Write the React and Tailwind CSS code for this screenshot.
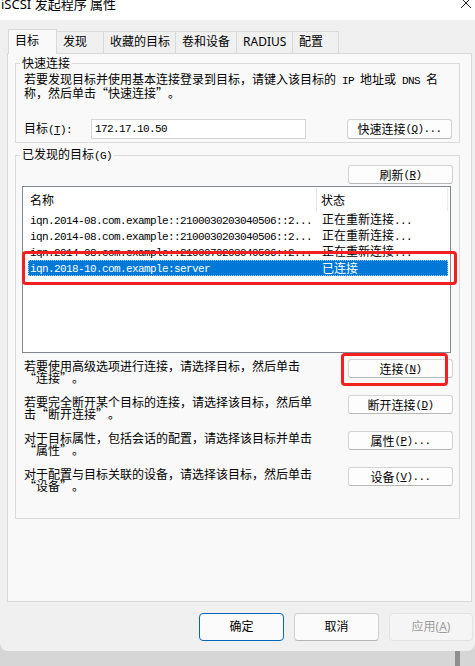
import React from "react";

const UI = "font-['Noto_Sans','Noto_Sans_CJK_SC',sans-serif]";
const SIM = "font-['Noto_Sans_CJK_SC',sans-serif] text-[12px] leading-[12px] text-black";

// full-width curly quotes, as in SimSun
const Cjk = ({ s }) =>
  s.split(/([“”])/).map((c, i) =>
    c === "“" ? (
      <span key={i} className="inline-block w-[12px] text-right">“</span>
    ) : c === "”" ? (
      <span key={i} className="inline-block w-[12px] text-left">”</span>
    ) : (
      <React.Fragment key={i}>{c}</React.Fragment>
    )
  );

// SimSun-like text: ascii runs drawn half-width (6px), "&x" underlines x
const Sim = ({ children }) =>
  String(children)
    .split(/([\x20-\x7e]+)/)
    .map((s, i) => {
      if (!s) return null;
      if (!/^[\x20-\x7e]+$/.test(s)) return <Cjk key={i} s={s} />;
      const acc = s.split("&");
      return (
        <span
          key={i}
          className="font-['Liberation_Mono',monospace] text-[11px] tracking-[-0.6px] whitespace-pre"
        >
          {acc.map((a, j) =>
            j === 0 ? (
              a
            ) : (
              <React.Fragment key={j}>
                <span className="underline underline-offset-1">{a[0]}</span>
                {a.slice(1)}
              </React.Fragment>
            )
          )}
        </span>
      );
    });

const Btn = ({ label, h = "h-[19px]" }) => (
  <button
    className={`flex items-center justify-center w-[105px] ${h} rounded-[3px] bg-[#fdfdfd] border border-[#d3d3d3] border-b-[#b8b8b8] ${SIM}`}
  >
    <Sim>{label}</Sim>
  </button>
);

const TABS = [
  ["发现", "w-[47px]"],
  ["收藏的目标", "w-[72px]"],
  ["卷和设备", "w-[61px]"],
  ["RADIUS", "w-[56px]"],
  ["配置", "w-[46px]"],
];

const ROWS = [
  ["iqn.2014-08.com.example::2100030203040506::2...", "正在重新连接..."],
  ["iqn.2014-08.com.example::2100030203040506::2...", "正在重新连接..."],
  ["iqn.2014-08.com.example::2100070203040506::2...", "正在重新连接..."],
];

const ACTIONS = [
  ["若要使用高级选项进行连接，请选择目标，然后单击", "“连接”。", "连接(&N)"],
  ["若要完全断开某个目标的连接，请选择该目标，然后单", "击“断开连接”。", "断开连接(&D)"],
  ["对于目标属性，包括会话的配置，请选择该目标并单击", "“属性”。", "属性(&P)..."],
  ["对于配置与目标关联的设备，请选择该目标，然后单击", "“设备”。", "设备(&V)..."],
];

export default function App() {
  return (
    <div className="relative w-[475px] h-[666px] overflow-hidden bg-gradient-to-b from-[#c2c2c2] to-[#d6d6d6]">
      <div className="h-[651px] bg-[#f0f0f0] rounded-b-[8px] flex flex-col overflow-hidden">
        {/* title bar */}
        <div className="h-[20px] bg-white flex items-start justify-between overflow-hidden">
          <span className={`${UI} ml-[1px] -mt-[5px] text-[13px] leading-[18px] text-black whitespace-pre`}>
            iSCSI 发起程序 属性
          </span>
          <svg width="12" height="12" viewBox="0 0 12 12" className="-mt-[3px] mr-[3px]">
            <path d="M1 1 L11 11 M11 1 L1 11" stroke="#222" strokeWidth="1" fill="none" />
          </svg>
        </div>

        {/* tabs */}
        <div className={`${UI} flex items-end h-[24px] ml-[8px] mt-[9px] text-[12px] text-black`}>
          <div className="relative z-10 w-[49px] h-[25px] -mb-px bg-[#f9f9f9] border border-b-0 border-[#d9d9d9] pl-[6px] pt-[3px] leading-[16px]">
            目标
          </div>
          {TABS.map(([t, w]) => (
            <div
              key={t}
              className={`${w} h-[22px] bg-[#f0f0f0] border-t border-r border-[#d9d9d9] pl-[6px] pt-[2px] leading-[16px] whitespace-nowrap`}
            >
              {t}
            </div>
          ))}
        </div>

        {/* panel */}
        <div className="ml-[7px] mr-[3px] h-[549px] bg-[#f9f9f9] border border-[#d9d9d9]">
          {/* quick connect */}
          <fieldset className="ml-[7px] mt-[3px] w-[445px] h-[86px] border border-[#dcdcdc] p-0 m-0">
            <legend className={`${SIM} ml-[4px] px-[2px]`}>快速连接</legend>
            <div className={`${SIM} pl-[8px] mt-[4px] whitespace-pre`}>
              <div>
                <Sim>若要发现目标并使用基本连接登录到目标，请键入该目标的 IP 地址或 DNS 名</Sim>
              </div>
              <div>
                <Sim>称，然后单击“快速连接”。</Sim>
              </div>
              <div className="flex items-center mt-[20px]">
                <div className="w-[67px]">
                  <Sim>目标(&T):</Sim>
                </div>
                <div className="w-[215px] h-[20px] bg-white border border-[#d6d6d6] flex items-center pl-[3px]">
                  <Sim>172.17.10.50</Sim>
                </div>
                <div className="ml-[41px]">
                  <Btn label="快速连接(&Q)..." h="h-[20px]" />
                </div>
              </div>
            </div>
          </fieldset>

          {/* discovered targets */}
          <fieldset className="ml-[7px] mt-[5px] w-[445px] h-[371px] border border-[#dcdcdc] p-0 m-0">
            <legend className={`${SIM} ml-[4px] px-[2px]`}>
              <Sim>已发现的目标(G)</Sim>
            </legend>
            <div className="flex justify-end pr-[6px] mt-[3px]">
              <Btn label="刷新(&R)" />
            </div>

            <div className={`${SIM} ml-[6px] mt-[2px] w-[429px] h-[167px] bg-white border border-[#828790]`}>
              <div className="flex h-[25px] items-stretch">
                <div className="w-[294px] pl-[7px] flex items-center border-r border-[#e5e5e5] my-[1px]">名称</div>
                <div className="w-[131px] pl-[4px] flex items-center border-r border-[#ededed] my-[1px]">状态</div>
              </div>
              {ROWS.map(([n, s], i) => (
                <div key={i} className="flex h-[16px] items-center ml-[5px] w-[420px]">
                  <div className="w-[289px] pl-[2px] whitespace-pre">
                    <Sim>{n}</Sim>
                  </div>
                  <div className="pl-[5px] whitespace-pre">
                    <Sim>{s}</Sim>
                  </div>
                </div>
              ))}
              <div className="flex h-[16px] items-center ml-[5px] w-[420px] bg-[#0078d7] text-white outline outline-1 outline-dotted outline-[#9fc9ee] -outline-offset-1">
                <div className="w-[289px] pl-[2px] whitespace-pre">
                  <Sim>iqn.2018-10.com.example:server</Sim>
                </div>
                <div className="pl-[5px]">已连接</div>
              </div>
            </div>

            <div className="mt-[6px]">
              {ACTIONS.map(([a, b, label]) => (
                <div key={label} className="flex justify-between h-[36px] pr-[6px]">
                  <div className={`${SIM} pl-[8px] pt-[1px] whitespace-pre`}>
                    <div>
                      <Sim>{a}</Sim>
                    </div>
                    <div>
                      <Sim>{b}</Sim>
                    </div>
                  </div>
                  <Btn label={label} />
                </div>
              ))}
            </div>
          </fieldset>
        </div>

        {/* footer */}
        <div className={`${UI} flex justify-end gap-[10px] pr-[2px] mt-[11px] text-[12px]`}>
          <button className="w-[85px] h-[28px] rounded-[4px] bg-[#fbfbfb] border border-[#0067c0] text-black">
            确定
          </button>
          <button className="w-[85px] h-[28px] rounded-[4px] bg-[#fbfbfb] border border-[#d0d0d0] border-b-[#b5b5b5] text-black">
            取消
          </button>
          <button className="w-[84px] h-[28px] rounded-[4px] bg-[#f5f5f5] border border-[#e3e3e3] text-[#9d9d9d]">
            应用(<span className="underline">A</span>)
          </button>
        </div>
      </div>

      {/* window behind the dialog */}
      <div className="flex h-[15px]">
        <div className="w-[455px]" />
        <div className="w-[5px] bg-[#8f8f8f]" />
      </div>

      {/* red annotation boxes */}
      <div className="absolute left-[22px] top-[251px] w-[435px] h-[34px] border-[3px] border-[#f42020] rounded-[4px]" />
      <div className="absolute left-[341px] top-[353px] w-[107px] h-[33px] border-[3px] border-[#f42020] rounded-[4px]" />
    </div>
  );
}
